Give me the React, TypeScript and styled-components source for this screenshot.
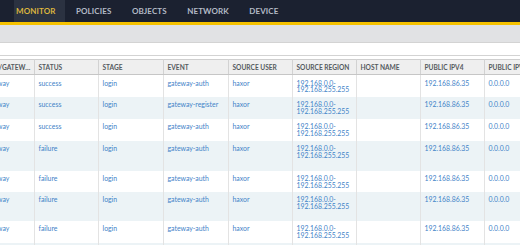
import styled, {createGlobalStyle} from "styled-components";

const GlobalStyle = createGlobalStyle`
  html, body {
    margin: 0;
    padding: 0;
    background: #ffffff;
    font-family: Lato, "Open Sans", "Liberation Sans", sans-serif;
    overflow: hidden;
  }
`;

const Page = styled.div`
  width: 520px;
  height: 245px;
  overflow: hidden;
  background: #fff;
`;

const TopNav = styled.nav`
  display: flex;
  align-items: stretch;
  height: 22px;
  padding-left: 14px;
  background: #1b2130;
  border-bottom: 3px solid #f6c200;
`;

const Tab = styled.div<{ $active?: boolean; $lead?: boolean }>`
  display: flex;
  align-items: center;
  padding: 0 10px 0 ${p => (p.$lead ? '2px' : '10.5px')};
  font-size: 8px;
  font-weight: 700;
  letter-spacing: 0.1px;
  color: ${p => (p.$active ? '#dcb53e' : '#b3bac6')};
  background: ${p => (p.$active ? '#2b3241' : 'transparent')};
`;

const SubBar = styled.div`
  height: 17px;
  background: #e1e2e4;
`;

const FilterBar = styled.div`
  height: 12px;
  border-top: 1px solid #d3d3d3;
  border-bottom: 1px solid #d3d3d3;
  background: #fff;
  margin-bottom: 3px;
`;

/* the grid is scrolled sideways, so its first column is partly out of view */
const Scroller = styled.div`
  overflow: hidden;
  width: 520px;
`;

const Grid = styled.table`
  margin-left: -30px;
  border-collapse: collapse;
  table-layout: fixed;
  width: 579px;
`;

const HeadCell = styled.th<{ $clip?: boolean }>`
  height: 14px;
  padding: 0 3px 0 4px;
  text-align: left;
  font-size: 6.6px;
  font-weight: 700;
  color: #555a60;
  background: #efefef;
  border-top: 1px solid #cfcfcf;
  border-bottom: 1px solid #c6c6c6;
  border-right: 1px solid #d2d2d2;
  white-space: nowrap;
  overflow: hidden;
  text-overflow: ${p => (p.$clip ? 'ellipsis' : 'clip')};
`;

const Row = styled.tr<{ $striped: boolean }>`
  background: ${p => (p.$striped ? '#ecf3f6' : '#ffffff')};
`;

const Cell = styled.td`
  padding: 4.5px 4px 0;
  vertical-align: top;
  font-size: 6.9px;
  line-height: 6.9px;
  color: #3f83c8;
  border-right: 1px solid #e3e3e3;
  white-space: nowrap;
  overflow: hidden;
`;

const columns = [
    {label: 'PORTAL/GATEWAY', width: 64},
    {label: 'STATUS', width: 64},
    {label: 'STAGE', width: 65},
    {label: 'EVENT', width: 65},
    {label: 'SOURCE USER', width: 64},
    {label: 'SOURCE REGION', width: 64},
    {label: 'HOST NAME', width: 64},
    {label: 'PUBLIC IPV4', width: 64},
    {label: 'PUBLIC IPV6', width: 65},
];

const rows = [
    {status: 'success', event: 'gateway-auth', h: 22},
    {status: 'success', event: 'gateway-register', h: 22},
    {status: 'success', event: 'gateway-auth', h: 22},
    {status: 'failure', event: 'gateway-auth', h: 30},
    {status: 'failure', event: 'gateway-auth', h: 21},
    {status: 'failure', event: 'gateway-auth', h: 29},
    {status: 'failure', event: 'gateway-auth', h: 22},
    {status: 'failure', event: 'gateway-auth', h: 22},
];

export default function App() {
    return (
        <>
            <GlobalStyle/>
            <Page>
                <TopNav>
                    <Tab $active $lead>MONITOR</Tab>
                    <Tab>POLICIES</Tab>
                    <Tab>OBJECTS</Tab>
                    <Tab>NETWORK</Tab>
                    <Tab>DEVICE</Tab>
                </TopNav>
                <SubBar/>
                <FilterBar/>
                <Scroller>
                    <Grid>
                        <colgroup>
                            {columns.map(c => <col key={c.label} style={{width: c.width}}/>)}
                        </colgroup>
                        <thead>
                        <tr>
                            {columns.map((c, i) => <HeadCell key={c.label} $clip={i === 0}>{c.label}</HeadCell>)}
                        </tr>
                        </thead>
                        <tbody>
                        {rows.map((r, i) => (
                            <Row key={i} $striped={i % 2 === 1} style={{height: r.h}}>
                                <Cell>gp-gateway</Cell>
                                <Cell>{r.status}</Cell>
                                <Cell>login</Cell>
                                <Cell>{r.event}</Cell>
                                <Cell>haxor</Cell>
                                <Cell>192.168.0.0-<br/>192.168.255.255</Cell>
                                <Cell></Cell>
                                <Cell>192.168.86.35</Cell>
                                <Cell>0.0.0.0</Cell>
                            </Row>
                        ))}
                        </tbody>
                    </Grid>
                </Scroller>
            </Page>
        </>
    );
}
